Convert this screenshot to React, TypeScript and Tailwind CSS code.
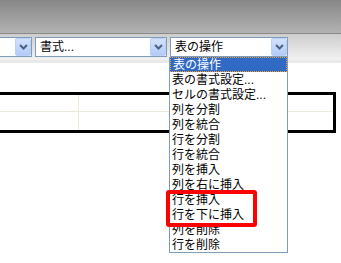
import React from 'react';

const items = [
  '表の操作',
  '表の書式設定...',
  'セルの書式設定...',
  '列を分割',
  '列を統合',
  '行を分割',
  '行を統合',
  '列を挿入',
  '列を右に挿入',
  '行を挿入',
  '行を下に挿入',
  '列を削除',
  '行を削除',
];

const Chevron = () => (
  <div className="flex h-[18px] w-[16px] shrink-0 items-center justify-center rounded-[2px] border border-[#b9cffa] bg-gradient-to-b from-[#d3e1fc] to-[#b4cbf8]">
    <svg width="9" height="6" viewBox="0 0 9 6">
      <path d="M1 1 L4.5 4.5 L8 1" fill="none" stroke="#4d6185" strokeWidth="2" />
    </svg>
  </div>
);

const SelectBox = ({ label, className }: { label: string; className: string }) => (
  <div className={`flex h-[20px] items-center justify-between border border-[#7f9db9] bg-white pl-[4px] ${className}`}>
    <span className="text-[12px] leading-[14px] text-black">{label}</span>
    <Chevron />
  </div>
);

export default function App() {
  return (
    <div
      className="relative h-[263px] w-[341px] overflow-hidden bg-white"
      style={{ fontFamily: '"Liberation Sans", "Noto Sans CJK JP", sans-serif' }}
    >
      {/* window chrome */}
      <div className="h-[33px] bg-gradient-to-b from-[#878787] to-[#b3b3b3]" />
      <div className="h-px bg-[#8a8a8a]" />
      <div className="flex h-[26px] items-start gap-[3px] bg-gradient-to-b from-[#cdcdcd] to-[#f2f2f2] pt-[3px]">
        <SelectBox label="" className="ml-[-30px] w-[62px]" />
        <SelectBox label="書式..." className="w-[132px]" />
        <SelectBox label="表の操作" className="w-[118px]" />
      </div>
      <div className="h-[3px] bg-[#e9e9e9]" />

      {/* document table */}
      <div className="mt-[29px] w-[336px] border-y-[3px] border-r-[3px] border-black">
        <div className="flex h-[17px] border-b border-[#ece9d8]">
          <div className="w-[79px] border-r border-[#ece9d8]" />
          <div className="flex-1" />
        </div>
        <div className="flex h-[18px]">
          <div className="w-[79px] border-r border-[#ece9d8]" />
          <div className="flex-1" />
        </div>
      </div>

      {/* dropdown list */}
      <div className="absolute left-[169px] top-[57px] w-[119px] border-x border-b border-[#7f9db9] bg-white">
        {items.map((item, i) => (
          <div
            key={item}
            className={`flex h-[15px] items-center pl-[2px] text-[12px] leading-[14px] ${
              i === 0
                ? 'border border-dotted border-[#f0a030] bg-[#316ac5] pl-[1px] leading-[13px] text-white'
                : 'text-black'
            }`}
          >
            {item}
          </div>
        ))}
      </div>

      {/* annotation */}
      <div className="absolute left-[166px] top-[190px] h-[37px] w-[91px] rounded-[3px] border-[4px] border-[#ff0000]" />
    </div>
  );
}
